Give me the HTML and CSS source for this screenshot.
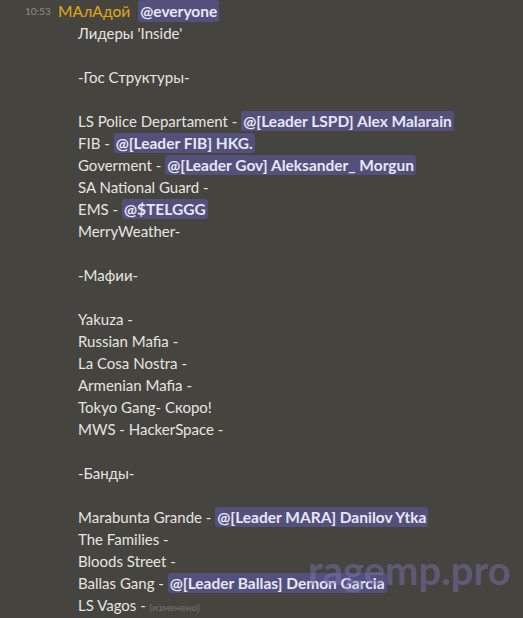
FILE: index.html
```html
<!DOCTYPE html>
<html lang="ru">
<head>
<meta charset="utf-8">
<link rel="stylesheet" href="styles.css">
</head>
<body>
<div class="message">
  <div class="header">
    <span class="time">10:53</span>
    <span class="author">МАлАдой</span>
    <span class="mention">@everyone</span>
  </div>
  <div class="content">
    <div class="line">Лидеры 'Inside'</div>
    <div class="line"></div>
    <div class="line">-Гос Структуры-</div>
    <div class="line"></div>
    <div class="line">LS Police Departament - <span class="mention">@[Leader LSPD] Alex Malarain</span></div>
    <div class="line">FIB - <span class="mention">@[Leader FIB] HKG.</span></div>
    <div class="line">Goverment - <span class="mention">@[Leader Gov] Aleksander_ Morgun</span></div>
    <div class="line">SA National Guard -</div>
    <div class="line">EMS - <span class="mention">@$TELGGG</span></div>
    <div class="line">MerryWeather-</div>
    <div class="line"></div>
    <div class="line">-Мафии-</div>
    <div class="line"></div>
    <div class="line">Yakuza -</div>
    <div class="line">Russian Mafia -</div>
    <div class="line">La Cosa Nostra -</div>
    <div class="line">Armenian Mafia -</div>
    <div class="line">Tokyo Gang- Скоро!</div>
    <div class="line">MWS - HackerSpace -</div>
    <div class="line"></div>
    <div class="line">-Банды-</div>
    <div class="line"></div>
    <div class="line">Marabunta Grande - <span class="mention">@[Leader MARA] Danilov Ytka</span></div>
    <div class="line">The Families -</div>
    <div class="line">Bloods Street -</div>
    <div class="line">Ballas Gang - <span class="mention">@[Leader Ballas] Demon Garcia</span></div>
    <div class="line">LS Vagos - <span class="edited">(изменено)</span></div>
  </div>
  <div class="watermark">ragemp.pro</div>
</div>
</body>
</html>
```
FILE: styles.css
```css
html, body {
  margin: 0;
  padding: 0;
  background: #46443e;
}
body {
  width: 523px;
  height: 618px;
  overflow: hidden;
  font-family: Lato, "Noto Sans", sans-serif;
  color: #e4e4e2;
  font-size: 15px;
}
.message {
  position: relative;
  height: 618px;
}
.header {
  height: 22px;
  display: flex;
  align-items: center;
  line-height: 20px;
}
.time {
  width: 58px;
  box-sizing: border-box;
  padding-left: 25px;
  font-size: 10px;
  color: #8e8c88;
}
.author {
  font-size: 15.5px;
  font-weight: 500;
  color: #d9a21c;
  margin-right: 8px;
}
.content {
  padding-left: 78px;
}
.line {
  height: 22px;
  line-height: 22px;
  white-space: nowrap;
}
.mention {
  background: #53517b;
  color: #e6e6f4;
  font-weight: 700;
  font-size: 15.5px;
  border-radius: 3px;
  padding: 1px 2px;
}
.edited {
  font-size: 10px;
  color: #75736e;
}
.watermark {
  position: absolute;
  left: 308px;
  top: 550px;
  font-size: 40px;
  font-weight: 700;
  color: rgba(125, 120, 190, 0.45);
  line-height: 40px;
}
```
